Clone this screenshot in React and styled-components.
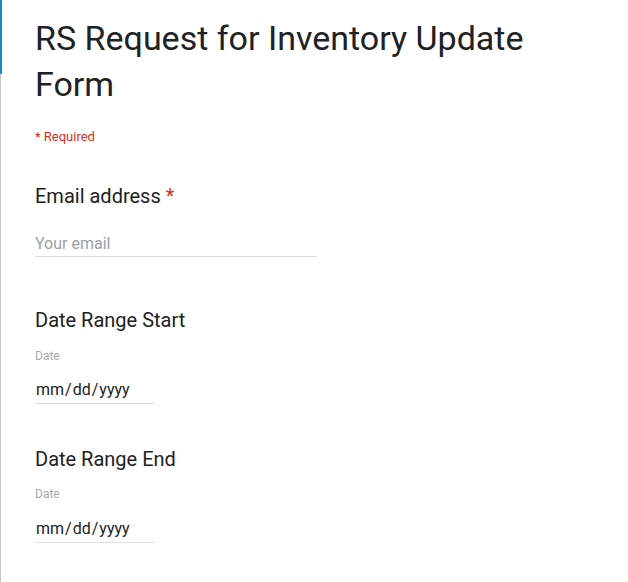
import React from "react";
import styled, { createGlobalStyle } from "styled-components";

const GlobalStyle = createGlobalStyle`
  html, body {
    margin: 0;
    padding: 0;
    background: #ffffff;
  }
  body {
    font-family: Roboto, "Noto Sans", Arial, sans-serif;
    color: #202124;
  }
`;

const Card = styled.div`
  position: relative;
  box-sizing: border-box;
  min-height: 582px;
  border-left: 1px solid #c6c6c6;
  padding: 15px 40px 0 34px;
  display: flex;
  flex-direction: column;

  &::before {
    content: "";
    position: absolute;
    left: -1px;
    top: 0;
    width: 2px;
    height: 74px;
    background: #1a88d3;
  }
`;

const Title = styled.h1`
  margin: 0;
  max-width: 500px;
  font-size: 34px;
  line-height: 46px;
  font-weight: 400;
  color: #202124;
`;

const RequiredNote = styled.div`
  margin-top: 21px;
  font-size: 13px;
  line-height: 18px;
  color: #d93025;
`;

const Question = styled.section`
  display: flex;
  flex-direction: column;
  margin-top: ${(p) => p.$gap}px;
`;

const QuestionTitle = styled.div`
  font-size: 20px;
  line-height: 24px;
  color: #202124;
`;

const Star = styled.span`
  color: #d93025;
  margin-left: 5px;
`;

const SubLabel = styled.div`
  margin-top: ${(p) => p.$top}px;
  font-size: 12px;
  line-height: 16px;
  color: #a5a9ad;
`;

const TextInput = styled.input`
  box-sizing: border-box;
  margin-top: ${(p) => p.$top}px;
  width: ${(p) => p.$width}px;
  height: 26px;
  padding: 0 0 1px 0;
  border: none;
  border-bottom: 1px solid #dadce0;
  outline: none;
  background: transparent;
  font-family: Roboto, "Noto Sans", Arial, sans-serif;
  font-size: 16px;
  line-height: 24px;
  color: #202124;

  &::placeholder {
    color: #9aa0a6;
  }
  &::-webkit-calendar-picker-indicator {
    display: none;
  }
  &::-webkit-datetime-edit {
    padding: 0;
  }
`;

export default function App() {
  return (
    <>
      <GlobalStyle />
      <Card>
        <Title>RS Request for Inventory Update Form</Title>
        <RequiredNote>* Required</RequiredNote>

        <Question $gap={38}>
          <QuestionTitle>
            Email address<Star>*</Star>
          </QuestionTitle>
          <TextInput type="email" placeholder="Your email" $top={23} $width={282} />
        </Question>

        <Question $gap={51}>
          <QuestionTitle>Date Range Start</QuestionTitle>
          <SubLabel $top={16}>Date</SubLabel>
          <TextInput type="date" $top={14} $width={120} />
        </Question>

        <Question $gap={43}>
          <QuestionTitle>Date Range End</QuestionTitle>
          <SubLabel $top={15}>Date</SubLabel>
          <TextInput type="date" $top={15} $width={120} />
        </Question>
      </Card>
    </>
  );
}
